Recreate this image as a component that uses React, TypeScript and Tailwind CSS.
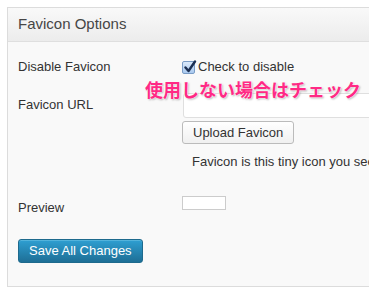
import React from "react";

const latin = "font-['Liberation_Sans',Arial,sans-serif]";

const CheckMark: React.FC = () => (
  <span className="relative inline-flex h-[13px] w-[13px] items-center justify-center rounded-[2px] border border-[#7a9cc6] bg-gradient-to-b from-[#dbe9fa] to-[#a9c9ef]">
    <svg
      viewBox="0 0 14 14"
      className="absolute -top-[2px] left-[0px] h-[14px] w-[14px]"
    >
      <path
        d="M2.5 7.5 L5.5 11 L12 1.5"
        fill="none"
        stroke="#1c2f52"
        strokeWidth="2.4"
        strokeLinecap="round"
        strokeLinejoin="round"
      />
    </svg>
  </span>
);

export default function App() {
  return (
    <div className={`relative h-[296px] w-[369px] overflow-hidden bg-white pl-[7px] pt-[7px] ${latin}`}>
      <div className="w-[420px] border border-[#dcdcdc] bg-[#f9f9f9]">
        {/* Header */}
        <div className="flex h-[34px] items-center border-b border-[#dfdfdf] bg-gradient-to-b from-[#f9f9f9] to-[#ececec] pl-[10px]">
          <h3 className="text-[15px] text-[#464646]">Favicon Options</h3>
        </div>

        {/* Body */}
        <div className="px-[10px] pb-[23px] pt-[17px] text-[13px] text-[#333]">
          {/* Disable */}
          <div className="flex h-[16px] items-center">
            <div className="w-[164px] shrink-0">Disable Favicon</div>
            <label className="flex items-center gap-[3px]">
              <CheckMark />
              <span>Check to disable</span>
            </label>
          </div>

          {/* URL */}
          <div className="mt-[18px] flex items-start">
            <div className="w-[164px] shrink-0 pt-[2px]">Favicon URL</div>
            <div className="flex min-w-0 flex-col items-start">
              <input
                type="text"
                className="ml-[1px] h-[25px] w-[230px] rounded-[3px] border border-[#dfdfdf] bg-white outline-none"
              />
              <button className="mt-[3px] h-[23px] rounded-[3px] border border-[#bbb] bg-gradient-to-b from-white to-[#f0f0f0] px-[10px] text-[13px] text-[#333]">
                Upload Favicon
              </button>
              <p className="ml-[10px] mt-[10px] whitespace-nowrap leading-[15px]">
                Favicon is this tiny icon you see beside URL in your browser.
              </p>
            </div>
          </div>

          {/* Preview */}
          <div className="mt-[27px] flex items-start">
            <div className="w-[164px] shrink-0 pt-[2px]">Preview</div>
            <div className="h-[14px] w-[44px] border border-[#ccc] bg-white" />
          </div>

          {/* Save */}
          <button className="mt-[21px] h-[24px] rounded-[3px] border border-[#1e6a8d] bg-gradient-to-b from-[#2e9fd2] to-[#1e6f96] px-[10px] text-[13px] text-white shadow-[inset_0_1px_0_rgba(120,200,230,0.5)]">
            Save All Changes
          </button>
        </div>
      </div>

      {/* Annotation overlay */}
      <div
        className="absolute left-[145px] top-[77px] whitespace-nowrap text-[18px] font-bold leading-[24px] text-[#ff2a85] font-['Noto_Sans_CJK_JP',sans-serif] [text-shadow:0_0_2px_#fff,0_0_2px_#fff,1px_1px_2px_rgba(0,0,0,0.35)]"
      >
        使用しない場合はチェック
      </div>
    </div>
  );
}
